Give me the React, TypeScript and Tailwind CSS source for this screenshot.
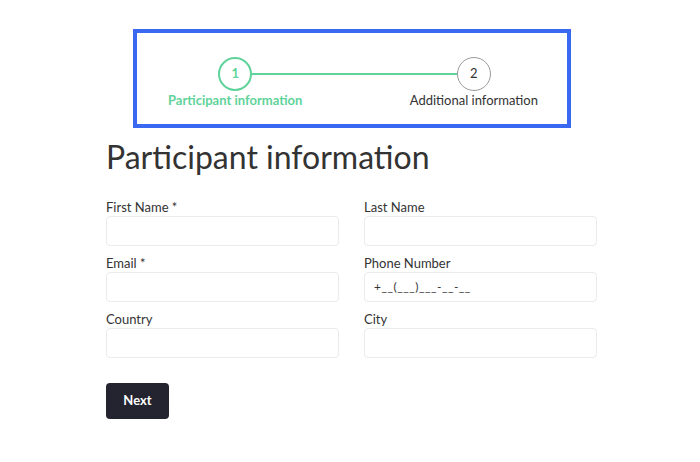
import React from 'react';

const font = { fontFamily: 'Lato, "Noto Sans", sans-serif' };

function Field({ label, placeholder }: { label: string; placeholder?: string }) {
  return (
    <div className="flex flex-col">
      <label className="text-[13px] leading-[16px] text-[#333] mb-[1px]">{label}</label>
      <div className="h-[30px] rounded-[4px] border border-[#ebebeb] bg-white flex items-center px-[9px] text-[12px] tracking-[0.5px] text-[#333]">
        {placeholder}
      </div>
    </div>
  );
}

export default function App() {
  return (
    <div className="w-[700px] h-[462px] bg-white" style={font}>
      <div className="pt-[29px] pl-[133px]">
        <div className="w-[438px] h-[99px] border-4 border-[#3b68f0]">
          <div className="relative flex justify-between pl-[31px] pr-[29px] pt-[24px]">
            <div className="absolute top-[40px] left-[114px] right-[109px] h-[2px] bg-[#5fd39a]" />
            <div className="flex flex-col items-center">
              <div className="relative z-10 w-[34px] h-[34px] rounded-full border-2 border-[#5fd39a] bg-white flex items-center justify-center text-[13px] font-bold text-[#5fd39a]">
                1
              </div>
              <span className="mt-[1px] text-[13px] leading-[16px] font-bold text-[#5fd39a]">Participant information</span>
            </div>
            <div className="flex flex-col items-center">
              <div className="relative z-10 w-[34px] h-[34px] rounded-full border border-[#9a9a9a] bg-white flex items-center justify-center text-[13px] text-[#333]">
                2
              </div>
              <span className="mt-[1px] text-[13px] leading-[16px] text-[#333]">Additional information</span>
            </div>
          </div>
        </div>
      </div>

      <div className="pl-[106px] w-[597px]">
        <h1 className="mt-[9px] text-[32px] leading-[40px] text-[#333]">Participant information</h1>
        <div className="mt-[22px] grid grid-cols-2 gap-x-[25px] gap-y-[9px]">
          <Field label="First Name *" />
          <Field label="Last Name" />
          <Field label="Email *" />
          <Field label="Phone Number" placeholder="+__(___)___-__-__" />
          <Field label="Country" />
          <Field label="City" />
        </div>
        <button className="mt-[25px] w-[63px] h-[36px] rounded-[4px] bg-[#242430] text-white text-[13px] font-bold">
          Next
        </button>
      </div>
    </div>
  );
}
